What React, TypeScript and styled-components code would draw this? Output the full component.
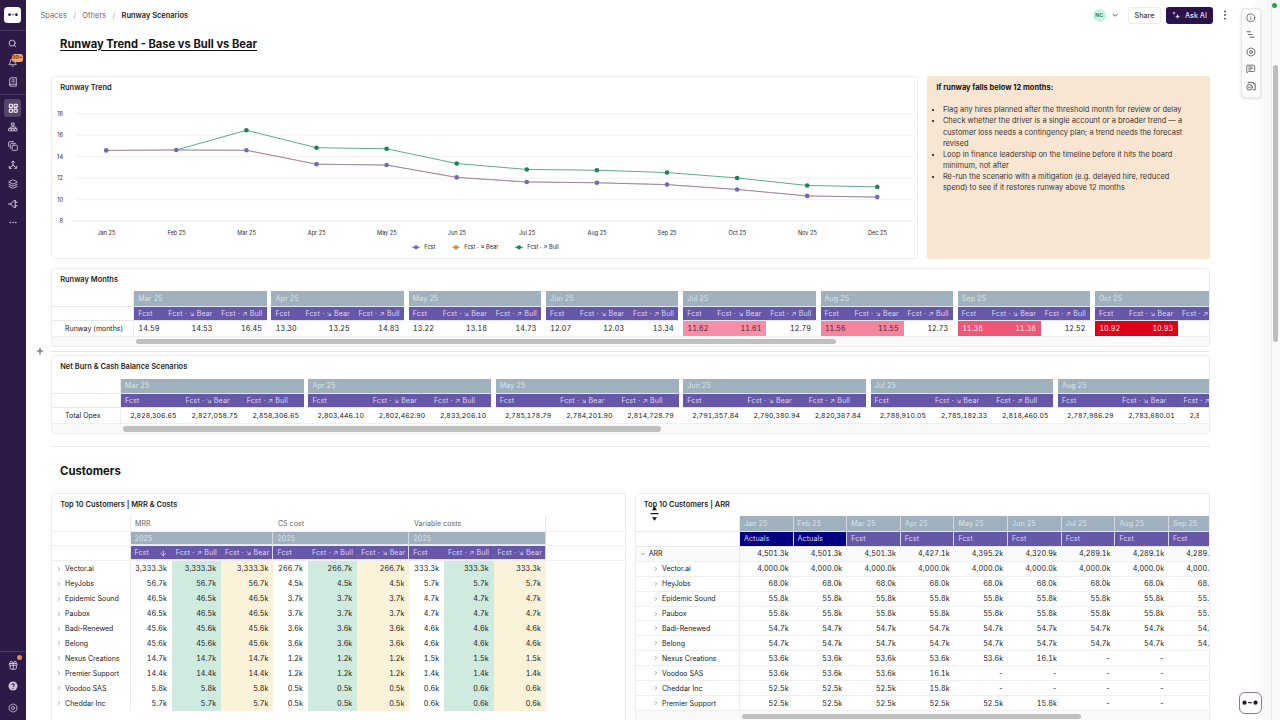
import React from "react";
import styled, { createGlobalStyle } from "styled-components";
import { Search, Bell, LayoutGrid, Layers, Gift, ChevronDown, ChevronRight, Info, MessageSquareText, Plus, ArrowDown } from "lucide-react";

const Global = createGlobalStyle`
  *, *::before, *::after { box-sizing: border-box; }
  body { margin: 0; background: #fff; overflow: hidden; font-family: Inter, "Liberation Sans", sans-serif; color: #202024; }
  svg { display: block; flex: none; }
`;

const Page = styled.div`
  position: relative;
  display: flex;
  width: 1280px;
  height: 720px;
  overflow: hidden;
`;

/* ---------- sidebar ---------- */
const Sidebar = styled.nav`
  width: 25.5px;
  flex: none;
  display: flex;
  flex-direction: column;
  align-items: center;
  background: #2e1a47;
  color: #cfc4dc;
`;
const SideGroup = styled.div<{ $pad: string; $line?: "top" | "bottom" }>`
  width: 100%;
  display: flex;
  flex-direction: column;
  align-items: center;
  padding: ${(p) => p.$pad};
  ${(p) => p.$line && `border-${p.$line}: 1px solid #4d3a66;`}
`;
const SideItem = styled.div<{ $h: number }>`
  position: relative;
  height: ${(p) => p.$h}px;
  width: 17px;
  display: flex;
  align-items: center;
  justify-content: center;
`;
const ActiveItem = styled.div`
  width: 17px;
  height: 17.5px;
  flex: none;
  display: flex;
  align-items: center;
  justify-content: center;
  border-radius: 3px;
  background: #56446c;
  color: #fff;
`;
const Logo = styled.div`
  width: 17px;
  height: 16.5px;
  display: flex;
  align-items: center;
  justify-content: center;
  border-radius: 3.5px;
  background: #fff;
`;
const Badge = styled.span`
  position: absolute;
  left: 7.5px;
  top: 1.5px;
  height: 7.5px;
  width: 11px;
  border-radius: 2.5px;
  background: #f4a36b;
  color: #3a1d22;
  font-size: 5.2px;
  line-height: 7.5px;
  text-align: center;
  font-weight: 500;
`;
const Dot = styled.span`
  position: absolute;
  right: -1px;
  top: 0.5px;
  width: 5px;
  height: 5px;
  border-radius: 50%;
  background: #e8894f;
`;
const Spacer = styled.div`
  flex: 1;
`;

/* ---------- page frame ---------- */
const Main = styled.main`
  flex: 1;
  min-width: 0;
  display: flex;
  flex-direction: column;
  height: 720px;
  overflow: hidden;
  background: linear-gradient(90deg, #fff 0, #fff 1222px, #f7f7f7 1246px);
`;
const TopBar = styled.header`
  height: 29.5px;
  flex: none;
  display: flex;
  align-items: center;
  padding: 1px 51.3px 0 15px;
`;
const Crumbs = styled.div`
  flex: 1;
  display: flex;
  gap: 6.3px;
  font-size: 7.55px;
  color: #6d6d72;
`;
const Current = styled.span`
  color: #1d1d21;
  font-weight: 600;
  font-size: 7.45px;
`;
const Slash = styled.span`
  color: #a0a0a5;
`;
const Avatar = styled.div`
  width: 13px;
  height: 13px;
  border-radius: 50%;
  background: #c6f6de;
  color: #2d6b4c;
  font-size: 5.2px;
  font-weight: 600;
  line-height: 13px;
  text-align: center;
  margin-right: 5px;
`;
const ShareButton = styled.button`
  height: 16.5px;
  width: 33.5px;
  margin: 0 5px 0 8.5px;
  padding: 0;
  border: 1px solid #ececee;
  border-radius: 3px;
  background: #fff;
  color: #3c3c42;
  font: 500 7.2px Inter, sans-serif;
`;
const AskButton = styled.button`
  height: 16.5px;
  width: 47px;
  display: flex;
  align-items: center;
  justify-content: center;
  gap: 4.5px;
  margin-right: 7.5px;
  padding: 0;
  border: 0;
  border-radius: 3px;
  background: #2b124c;
  color: #e9e2f3;
  font: 500 7.2px Inter, sans-serif;
`;
const Content = styled.div`
  width: 1158.5px;
  margin-left: 25.6px;
  display: flex;
  flex-direction: column;
`;
const Heading = styled.h1<{ $top: number; $h: number; $size: number; $underline?: boolean }>`
  margin: ${(p) => p.$top}px 0 0 9px;
  height: ${(p) => p.$h}px;
  line-height: 16px;
  font-size: ${(p) => p.$size}px;
  font-weight: 700;
  color: #131316;
  text-decoration: ${(p) => (p.$underline ? "underline" : "none")};
  text-decoration-thickness: 1px;
  text-underline-offset: 1.5px;
`;
const Columns = styled.div<{ $after?: number }>`
  display: flex;
  gap: 8.5px;
  margin-bottom: ${(p) => p.$after ?? 0}px;
`;
const Card = styled.section<{ $w: number; $h: number }>`
  width: ${(p) => p.$w}px;
  height: ${(p) => p.$h}px;
  flex: none;
  display: flex;
  flex-direction: column;
  border: 1px solid #ededef;
  border-radius: 3px;
  background: #fff;
  overflow: hidden;
`;
const CardTitle = styled.h2<{ $h: number }>`
  margin: 0;
  padding-left: 8.1px;
  height: ${(p) => p.$h}px;
  flex: none;
  line-height: 22.8px;
  font-size: 7.45px;
  font-weight: 600;
  color: #1f1f23;
`;
const Rule = styled.hr<{ $m: string }>`
  margin: ${(p) => p.$m};
  border: 0;
  height: 1px;
  width: 100%;
  background: #e6e6e8;
`;
const Note = styled.aside`
  flex: 1;
  height: 182.5px;
  border-radius: 3px;
  background: #f8e6d3;
  color: #40342d;
  font-size: 7.48px;
  line-height: 11.15px;
  padding: 5.5px 22px 0 9.5px;
`;
const NoteTitle = styled.strong`
  display: block;
  margin-bottom: 11.6px;
  color: #17120f;
  font-weight: 700;
`;
const NoteList = styled.ul`
  margin: 0;
  padding-left: 6.5px;
  li::marker { color: #111; }
`;

/* ---------- tables ---------- */
const Line = styled.div<{ $h: number; $border?: boolean; $bg?: string }>`
  display: flex;
  flex: none;
  height: ${(p) => p.$h}px;
  ${(p) => p.$border && "border-bottom: 1px solid #efeff1;"}
  ${(p) => p.$bg && `background: ${p.$bg};`}
`;
const Label = styled.div<{ $w: number; $pad?: number; $line?: boolean }>`
  width: ${(p) => p.$w}px;
  flex: none;
  display: flex;
  align-items: center;
  gap: 3px;
  padding-left: ${(p) => p.$pad ?? 13}px;
  font-size: 7px;
  white-space: nowrap;
  border-right: 1px solid #ececee;
  ${(p) => p.$line && "border-bottom: 1px solid #e8e8eb;"}
  svg { color: #77777c; }
`;
const Group = styled.div<{ $gap: number }>`
  display: flex;
  flex: none;
  margin-right: ${(p) => p.$gap}px;
`;
const Head = styled.div<{ $w: number; $bg: string; $sep?: boolean; $date?: boolean }>`
  width: ${(p) => p.$w}px;
  flex: none;
  display: flex;
  align-items: center;
  justify-content: space-between;
  padding: 0 4.5px 0 4px;
  background: ${(p) => p.$bg};
  color: ${(p) => (p.$date ? "#dbe5ea" : "#dcd5f0")};
  font-size: 7.1px;
  letter-spacing: 0.1px;
  white-space: pre;
  border-bottom: 1px solid #e4e6ef;
  ${(p) => p.$sep && "border-right: 1px solid #d5d8e6;"}
`;
const Cell = styled.div<{ $w: number; $bg?: string; $fg?: string; $size?: number }>`
  width: ${(p) => p.$w}px;
  flex: none;
  display: flex;
  align-items: center;
  justify-content: flex-end;
  padding-right: 4.8px;
  font-size: ${(p) => p.$size ?? 7.15}px;
  letter-spacing: 0.08px;
  font-variant-numeric: tabular-nums;
  white-space: nowrap;
  background: ${(p) => p.$bg ?? "transparent"};
  color: ${(p) => p.$fg ?? "#202024"};
`;
const Clip = styled.div<{ $right: number }>`
  display: flex;
  flex: 1;
  min-width: 0;
  margin-right: ${(p) => p.$right}px;
  overflow: hidden;
`;
const ScrollTrack = styled.div<{ $left: number }>`
  flex: 1;
  display: flex;
  align-items: center;
  padding-left: ${(p) => p.$left}px;
  background: #f9f9f9;
`;
const Thumb = styled.div<{ $w: number }>`
  width: ${(p) => p.$w}px;
  height: 5.5px;
  border-radius: 3px;
  background: #bfbfbf;
`;
const Measure = styled.div<{ $w: number; $last?: boolean }>`
  width: ${(p) => p.$w}px;
  flex: none;
  display: flex;
  align-items: center;
  padding: 0 0 1px 4.5px;
  font-size: 7.1px;
  color: #66666b;
  ${(p) => p.$last && "border-right: 1px solid #e4e4e6;"}
`;

/* ---------- floating parts ---------- */
const ToolPanel = styled.div`
  position: absolute;
  left: 1240.5px;
  top: 7.5px;
  width: 20.5px;
  height: 90px;
  display: flex;
  flex-direction: column;
  align-items: center;
  justify-content: space-between;
  padding: 4.5px 0 5.5px;
  border-radius: 4px;
  background: #fcfcfc;
  color: #55555a;
  border: 1px solid #e9e9eb;
  box-shadow: 0 1px 3px rgba(0, 0, 0, 0.13);
`;
const PageScroll = styled.div`
  position: absolute;
  left: 1271px;
  top: 0;
  width: 9px;
  height: 720px;
  background: #fafafa;
  border-left: 1px solid #ebebeb;
`;
const PageThumb = styled.div`
  position: absolute;
  left: 0.5px;
  top: 64.5px;
  width: 5.5px;
  height: 277.5px;
  border-radius: 3px;
  background: #bdbdbd;
`;
const Status = styled.div`
  position: absolute;
  left: 0;
  top: 2.5px;
  width: 5px;
  height: 5px;
  border-radius: 50%;
  background: #2f9e44;
`;
const BotButton = styled.div`
  position: absolute;
  left: 1239px;
  top: 691.5px;
  width: 22.5px;
  height: 22.5px;
  display: flex;
  align-items: center;
  justify-content: center;
  border-radius: 6px;
  border: 1px solid #94709f;
  background: #fff;
`;
const AddBlock = styled.div`
  position: absolute;
  left: 34.5px;
  top: 346px;
  color: #55555a;
`;
const ResizeCursor = styled.div`
  position: absolute;
  left: 650px;
  top: 506px;
`;

/* ---------- icons ---------- */
const Glyph = ({ size = 10, width = 1, children }: { size?: number; width?: number; children: React.ReactNode }) => (
  <svg width={size} height={size} viewBox="0 0 10 10" fill="none" stroke="currentColor" strokeWidth={width} strokeLinecap="round" strokeLinejoin="round">
    {children}
  </svg>
);
const BookIcon = () => (
  <Glyph width={0.9}>
    <path d="M1.7 8.2V2c0-.7.5-1.2 1.2-1.2h5.4v8.4H2.8c-.6 0-1.1-.4-1.1-1s.5-1 1.1-1h5.5M4 2.9h2.3M4 4.7h2.3" />
  </Glyph>
);
const OrgIcon = () => (
  <Glyph width={0.9}>
    <rect x="3.8" y="1" width="2.4" height="2.2" />
    <path d="M5 3.2v1.6M2.2 6.6V5h5.6v1.6" />
    <rect x="1" y="6.6" width="2.3" height="2.2" />
    <rect x="3.9" y="6.6" width="2.2" height="2.2" />
    <rect x="6.7" y="6.6" width="2.3" height="2.2" />
  </Glyph>
);
const StackIcon = () => (
  <Glyph width={0.9}>
    <rect x="4.2" y="4.2" width="5.2" height="5.2" rx="1" />
    <path d="M2.4 7.4V3.4q0-1 1-1h4M.6 5.4V1.6q0-1 1-1h3.8" />
  </Glyph>
);
const ForkIcon = () => (
  <Glyph width={1}>
    <path d="M5 1.2v4.4M3.6 2.4L5 1l1.4 1.4M5 5.2L1.7 7.9M5 5.2l3.3 2.7M1.2 6.4l.2 1.9 1.9.1M8.8 6.4l-.2 1.9-1.9.1" />
  </Glyph>
);
const PlugIcon = () => (
  <Glyph width={1}>
    <path d="M.4 5h2.2M7.2 1.6H5.8L2.6 5l3.2 3.4h1.4M7.2 1.6v6.8M7.2 3.3h2M7.2 6.7h2" />
  </Glyph>
);
const GearIcon = ({ size = 10 }: { size?: number }) => (
  <Glyph size={size} width={0.85}>
    <path d="M4.2 1.2Q5 .5 5.8 1.2L8 2.4q.9.3.8 1.1v3q.1.8-.8 1.1L5.8 8.8Q5 9.5 4.2 8.8L2 7.6q-.9-.3-.8-1.1v-3q-.1-.8.8-1.1z" />
    <circle cx="5" cy="5" r="1.5" />
  </Glyph>
);
const HelpIcon = () => (
  <svg width="10" height="10" viewBox="0 0 10 10">
    <circle cx="5" cy="5" r="4.5" fill="#cfc4dc" />
    <path d="M3.7 4c0-1.8 2.7-1.7 2.7 0C6.4 5 5 5 5 6" fill="none" stroke="#2e1a47" strokeWidth="1" />
    <circle cx="5" cy="7.4" r=".6" fill="#2e1a47" />
  </svg>
);
const BotFace = ({ w, color }: { w: number; color: string }) => (
  <svg width={w} height={w / 3} viewBox="0 0 15 5">
    <circle cx="2.3" cy="2.5" r="2" fill={color} />
    <circle cx="12.7" cy="2.5" r="2" fill={color} />
    <path d="M5.8 2.5h3.4" stroke={color} strokeWidth="1.1" />
  </svg>
);

/* ---------- data ---------- */
const GREY = "#9fb1bd";
const PURPLE = "#6757a9";
const NAVY = "#020080";
const MINT = "#cfeadf";
const CREAM = "#faf2d9";

const months = ["Jan 25", "Feb 25", "Mar 25", "Apr 25", "May 25", "Jun 25", "Jul 25", "Aug 25", "Sep 25", "Oct 25", "Nov 25", "Dec 25"];
const baseLine = [14.58, 14.62, 14.59, 13.3, 13.22, 12.07, 11.65, 11.57, 11.4, 10.95, 10.35, 10.24];
const bullLine = [14.58, 14.62, 16.45, 14.83, 14.73, 13.36, 12.81, 12.74, 12.52, 12.02, 11.32, 11.19];

const runway: [string, string[]][] = [
  ["Mar 25", ["14.59", "14.53", "16.45"]],
  ["Apr 25", ["13.30", "13.25", "14.83"]],
  ["May 25", ["13.22", "13.18", "14.73"]],
  ["Jun 25", ["12.07", "12.03", "13.34"]],
  ["Jul 25", ["11.62", "11.61", "12.79"]],
  ["Aug 25", ["11.56", "11.55", "12.73"]],
  ["Sep 25", ["11.38", "11.38", "12.52"]],
  ["Oct 25", ["10.92", "10.93", ""]],
];
const heat: Record<string, [string, string]> = {
  "Jul 25": ["#f68ea5", "#4b2630"],
  "Aug 25": ["#f5859d", "#4b2630"],
  "Sep 25": ["#ee5576", "#ffe9ee"],
  "Oct 25": ["#dd0019", "#ffe9ec"],
};
const opex: [string, string[]][] = [
  ["Mar 25", ["2,828,306.65", "2,827,058.75", "2,858,306.65"]],
  ["Apr 25", ["2,803,446.10", "2,802,462.90", "2,833,206.10"]],
  ["May 25", ["2,785,178.79", "2,784,201.90", "2,814,728.79"]],
  ["Jun 25", ["2,791,357.84", "2,790,380.94", "2,820,367.84"]],
  ["Jul 25", ["2,788,910.05", "2,785,182.33", "2,818,460.05"]],
  ["Aug 25", ["2,787,986.29", "2,783,680.01", "2,817,536.29"]],
];
const customers: [string, string, string, string][] = [
  ["Vector.ai", "3,333.3k", "266.7k", "333.3k"],
  ["HeyJobs", "56.7k", "4.5k", "5.7k"],
  ["Epidemic Sound", "46.5k", "3.7k", "4.7k"],
  ["Paubox", "46.5k", "3.7k", "4.7k"],
  ["Badi-Renewed", "45.6k", "3.6k", "4.6k"],
  ["Belong", "45.6k", "3.6k", "4.6k"],
  ["Nexus Creations", "14.7k", "1.2k", "1.5k"],
  ["Premier Support", "14.4k", "1.2k", "1.4k"],
  ["Voodoo SAS", "5.8k", "0.5k", "0.6k"],
  ["Cheddar Inc", "5.7k", "0.5k", "0.6k"],
];
const measures: [string, number[]][] = [
  ["MRR", [41.1, 49.4, 52.3]],
  ["CS cost", [34.5, 49.3, 52.2]],
  ["Variable costs", [34.6, 49.6, 52.3]],
];
const arrMonths = ["Jan 25", "Feb 25", "Mar 25", "Apr 25", "May 25", "Jun 25", "Jul 25", "Aug 25", "Sep 25"];
const same = (v: string) => Array(9).fill(v) as string[];
const arrRows: [string, string[]][] = [
  ["ARR", ["4,501.3k", "4,501.3k", "4,501.3k", "4,427.1k", "4,395.2k", "4,320.9k", "4,289.1k", "4,289.1k", "4,289.1k"]],
  ["Vector.ai", same("4,000.0k")],
  ["HeyJobs", same("68.0k")],
  ["Epidemic Sound", same("55.8k")],
  ["Paubox", same("55.8k")],
  ["Badi-Renewed", same("54.7k")],
  ["Belong", same("54.7k")],
  ["Nexus Creations", ["53.6k", "53.6k", "53.6k", "53.6k", "53.6k", "16.1k", "-", "-", ""]],
  ["Voodoo SAS", ["53.6k", "53.6k", "53.6k", "16.1k", "-", "-", "-", "-", ""]],
  ["Cheddar Inc", ["52.5k", "52.5k", "52.5k", "15.8k", "-", "-", "-", "-", ""]],
  ["Premier Support", ["52.5k", "52.5k", "52.5k", "52.5k", "52.5k", "15.8k", "-", "-", ""]],
];

/* ---------- chart ---------- */
const cx = (i: number) => 54.2 + i * 70.1;
const cy = (v: number) => 122.2 - (v - 8) * 10.76;
const Chart = () => (
  <svg width="865" height="160" viewBox="0 0 865 160" fontFamily="Inter, sans-serif" fontSize="5.6" fill="#2a2a30">
    {[18, 16, 14, 12, 10, 8].map((v) => (
      <g key={v}>
        <path d={`M${v === 8 ? 20 : 24} ${cy(v)}H861`} stroke="#ececee" strokeWidth={v === 8 ? 1.2 : 0.8} />
        <text x="11" y={cy(v) + 2} textAnchor="end">{v}</text>
      </g>
    ))}
    <polyline points={baseLine.map((v, i) => `${cx(i)},${cy(v)}`).join(" ")} fill="none" stroke="#b9785e" strokeWidth="0.7" />
    <polyline points={baseLine.map((v, i) => `${cx(i)},${cy(v)}`).join(" ")} fill="none" stroke="#7468b8" strokeWidth="0.7" strokeOpacity="0.7" />
    <polyline points={bullLine.slice(1).map((v, i) => `${cx(i + 1)},${cy(v)}`).join(" ")} fill="none" stroke="#4ca27e" strokeWidth="0.9" />
    {bullLine.map((v, i) => i > 1 && <circle key={i} cx={cx(i)} cy={cy(v)} r="2.3" fill="#1a8358" />)}
    {baseLine.map((v, i) => <circle key={i} cx={cx(i)} cy={cy(v)} r="2.3" fill="#7468bd" />)}
    {months.map((m, i) => <text key={m} x={cx(i) + 0.2} y="135.5" textAnchor="middle">{m}</text>)}
    {([[360, "#7468bd", "Fcst"], [400, "#c98a34", "Fcst · ↘ Bear"], [463, "#1a8358", "Fcst · ↗ Bull"]] as [number, string, string][]).map(([x, c, t]) => (
      <g key={t}>
        <path d={`M${x} 148.3h8`} stroke={c} strokeWidth="0.9" />
        <circle cx={x + 4} cy="148.3" r="2.1" fill={c} />
        <text x={x + 12.3} y="150.3">{t}</text>
      </g>
    ))}
  </svg>
);

const SCEN = ["Fcst", "Fcst · ↘ Bear", "Fcst · ↗ Bull"];

type ScenarioProps = { title: string; label: string; first: number; gap: number; cols: number[]; heights: number[]; data: [string, string[]][]; left: number; thumb: number; size?: number };
const ScenarioCard = ({ title, label, first, gap, cols, heights, data, left, thumb, size }: ScenarioProps) => {
  const total = cols.reduce((a, b) => a + b, 0);
  return (
    <Card $w={1158.5} $h={79}>
      <CardTitle $h={heights[0]}>{title}</CardTitle>
      <Line $h={heights[1]}>
        <Label $w={first} $line />
        {data.map(([m]) => <Group key={m} $gap={gap}><Head $w={total} $bg={GREY} $date>{m}</Head></Group>)}
      </Line>
      <Line $h={heights[2]}>
        <Label $w={first} $line />
        {data.map(([m]) => (
          <Group key={m} $gap={gap}>
            {cols.map((w, i) => <Head key={i} $w={w} $bg={PURPLE}>{SCEN[i]}</Head>)}
          </Group>
        ))}
      </Line>
      <Line $h={heights[3]} $border>
        <Label $w={first}>{label}</Label>
        <Clip $right={9.5}>
          {data.map(([m, vals]) => {
            const tint = label.startsWith("Runway") ? heat[m] : undefined;
            return (
              <Group key={m} $gap={gap}>
                {cols.map((w, i) => (
                  <Cell key={i} $w={w} $size={size} $bg={i < 2 ? tint?.[0] : undefined} $fg={i < 2 ? tint?.[1] : undefined}>{vals[i]}</Cell>
                ))}
              </Group>
            );
          })}
        </Clip>
      </Line>
      <ScrollTrack $left={left}><Thumb $w={thumb} /></ScrollTrack>
    </Card>
  );
};

const MrrCard = () => (
  <Card $w={575} $h={240}>
    <CardTitle $h={22.5}>Top 10 Customers | MRR &amp; Costs</CardTitle>
    <Line $h={15.5} $border>
      <Label $w={78.5} />
      {measures.map(([m, ws], i) => <Measure key={m} $w={ws.reduce((a, b) => a + b, 0)} $last={i === 2}>{m}</Measure>)}
    </Line>
    <Line $h={14.5} $border>
      <Label $w={78.5} />
      {measures.map(([m, ws]) => <Head key={m} $w={ws.reduce((a, b) => a + b, 0)} $bg={GREY} $sep $date>2025</Head>)}
    </Line>
    <Line $h={14.8} $border>
      <Label $w={78.5} />
      {measures.map(([m, ws], g) => ws.map((w, i) => (
        <Head key={m + i} $w={w} $bg={PURPLE} $sep={i === 2}>
          {["Fcst", "Fcst · ↗ Bull", "Fcst · ↘ Bear"][i]}
          {g === 0 && i === 0 && <ArrowDown size={8.5} strokeWidth={2.4} />}
        </Head>
      )))}
    </Line>
    {customers.map(([name, ...vals]) => (
      <Line key={name} $h={14.95}>
        <Label $w={78.5} $pad={4}><ChevronRight size={6} strokeWidth={2.6} />{name}</Label>
        {measures.map(([m, ws], g) => ws.map((w, i) => (
          <Cell key={m + i} $w={w} $bg={[undefined, MINT, CREAM][i]}>{vals[g]}</Cell>
        )))}
      </Line>
    ))}
  </Card>
);

const ArrCard = () => (
  <Card $w={575} $h={240}>
    <CardTitle $h={22.5}>Top 10 Customers | ARR</CardTitle>
    <Line $h={15.5}>
      <Label $w={104.3} $line />
      {arrMonths.map((m) => <Head key={m} $w={53.65} $bg={GREY} $sep $date>{m}</Head>)}
    </Line>
    <Line $h={14.8}>
      <Label $w={104.3} $line />
      {arrMonths.map((m, i) => <Head key={m} $w={53.65} $bg={i < 2 ? NAVY : PURPLE} $sep>{i < 2 ? "Actuals" : "Fcst"}</Head>)}
    </Line>
    {arrRows.map(([name, vals], r) => (
      <Line key={name} $h={14.95} $border $bg={r === 0 ? "#fafafa" : undefined}>
        <Label $w={104.3} $pad={r === 0 ? 4.2 : 17.4}>
          {r === 0 ? <ChevronDown size={6} strokeWidth={2.6} /> : <ChevronRight size={6} strokeWidth={2.6} />}
          {name}
        </Label>
        {vals.map((v, i) => <Cell key={i} $w={53.65}>{v}</Cell>)}
      </Line>
    ))}
    <Line $h={11}><ScrollTrack $left={106}><Thumb $w={339} /></ScrollTrack></Line>
  </Card>
);

export default function App() {
  return (
    <Page>
      <Global />
      <Sidebar>
        <SideGroup $pad="6.5px 0 7px" $line="bottom">
          <Logo><BotFace w={10} color="#2b124c" /></Logo>
        </SideGroup>
        <SideGroup $pad="2.5px 0 2.5px" $line="bottom">
          <SideItem $h={19.4}><Search size={9} strokeWidth={2.4} /></SideItem>
          <SideItem $h={19.4}><Bell size={9.5} strokeWidth={2.4} /><Badge>99+</Badge></SideItem>
          <SideItem $h={19.4}><BookIcon /></SideItem>
        </SideGroup>
        <SideGroup $pad="4px 0 0">
          <ActiveItem><LayoutGrid size={10.5} strokeWidth={2.4} /></ActiveItem>
          <SideItem $h={21}><OrgIcon /></SideItem>
          <SideItem $h={17.5}><StackIcon /></SideItem>
          <SideItem $h={19.5}><ForkIcon /></SideItem>
          <SideItem $h={19.5}><Layers size={10} strokeWidth={2.2} /></SideItem>
          <SideItem $h={19.3}><PlugIcon /></SideItem>
          <SideItem $h={19}>
            <svg width="8" height="3" viewBox="0 0 8 3" fill="currentColor"><circle cx="1.2" cy="1.5" r=".8" /><circle cx="4" cy="1.5" r=".8" /><circle cx="6.8" cy="1.5" r=".8" /></svg>
          </SideItem>
        </SideGroup>
        <Spacer />
        <SideGroup $pad="2.5px 0 1.5px" $line="top">
          <SideItem $h={21.5}><Gift size={10.5} strokeWidth={2.2} /><Dot /></SideItem>
          <SideItem $h={21.5}><HelpIcon /></SideItem>
          <SideItem $h={21.5}><GearIcon /></SideItem>
        </SideGroup>
      </Sidebar>

      <Main>
        <TopBar>
          <Crumbs><span>Spaces</span><Slash>/</Slash><span>Others</span><Slash>/</Slash><Current>Runway Scenarios</Current></Crumbs>
          <Avatar>NC</Avatar>
          <ChevronDown size={8.5} strokeWidth={2.6} color="#55555a" />
          <ShareButton>Share</ShareButton>
          <AskButton>
            <svg width="8" height="8" viewBox="0 0 8 8" fill="currentColor"><path d="M2 .4l.5 1.2 1.2.5-1.2.5L2 3.8l-.5-1.2L.3 2.1l1.2-.5zM5.6 3l.7 1.8L8 5.5l-1.7.7L5.6 8l-.7-1.8-1.7-.7 1.7-.7z" /></svg>
            Ask AI
          </AskButton>
          <svg width="8" height="10" viewBox="0 0 8 10" fill="#3d3d42"><circle cx="4" cy="1.4" r=".9" /><circle cx="4" cy="5" r=".9" /><circle cx="4" cy="8.6" r=".9" /></svg>
        </TopBar>
        <Content>
          <Heading $top={6} $h={40.5} $size={11.15} $underline>Runway Trend - Base vs Bull vs Bear</Heading>
          <Columns $after={9.2}>
            <Card $w={867.3} $h={182.8}>
              <CardTitle $h={21.5}>Runway Trend</CardTitle>
              <Chart />
            </Card>
            <Note>
              <NoteTitle>If runway falls below 12 months:</NoteTitle>
              <NoteList>
                <li>Flag any hires planned after the threshold month for review or delay</li>
                <li>Check whether the driver is a single account or a broader trend — a customer loss needs a contingency plan; a trend needs the forecast revised</li>
                <li>Loop in finance leadership on the timeline before it hits the board minimum, not after</li>
                <li>Re-run the scenario with a mitigation (e.g. delayed hire, reduced spend) to see if it restores runway above 12 months</li>
              </NoteList>
            </Note>
          </Columns>
          <ScenarioCard title="Runway Months" label="Runway (months)" first={82.1} gap={4.78} cols={[30, 53, 49.5]} heights={[22, 16, 14.3, 15.7]} data={runway} left={84} thumb={700} />
          <Rule $m="4px 0 3.5px" />
          <ScenarioCard title="Net Burn & Cash Balance Scenarios" label="Total Opex" first={69} gap={4.7} cols={[60.3, 61.3, 61.1]} heights={[22.4, 15, 14.4, 16]} data={opex} left={71} thumb={538} size={6.85} />
          <Rule $m="11.5px 0 0" />
          <Heading $top={16} $h={30} $size={11.3}>Customers</Heading>
          <Columns>
            <MrrCard />
            <ArrCard />
          </Columns>
        </Content>
      </Main>

      <ToolPanel>
        <Info size={9.5} strokeWidth={2} />
        <Glyph size={9}><path d="M1 2h4M2.6 5h4M4.6 8h4.4" /></Glyph>
        <GearIcon />
        <MessageSquareText size={9.5} strokeWidth={2} />
        <Glyph size={10} width={0.9}>
          <circle cx="3.6" cy="6.3" r="2.8" /><path d="M2.4 6l1.2.8 1-1.2M2.2 2.2V1.4h5.2v1M8 2.6h1.2v6.2H7.4" />
        </Glyph>
      </ToolPanel>
      <PageScroll><PageThumb /><Status /></PageScroll>
      <BotButton><BotFace w={16} color="#1c1c20" /></BotButton>
      <AddBlock><Plus size={10} strokeWidth={2.6} /></AddBlock>
      <ResizeCursor>
        <svg width="9" height="16" viewBox="0 0 9 16" fill="#111">
          <path d="M4.5 0.6L7 4.2H2Z" />
          <path d="M0.5 7H8.5V8.2H0.5Z" />
          <path d="M4.5 14.8L7 11.2H2Z" />
        </svg>
      </ResizeCursor>
    </Page>
  );
}
